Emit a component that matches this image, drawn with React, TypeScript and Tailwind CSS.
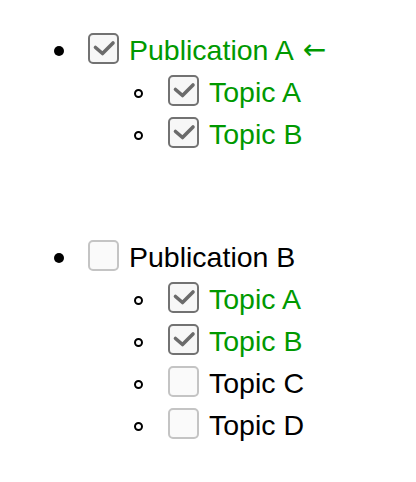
import React from "react";

type Item = { label: string; checked: boolean; arrow?: boolean };
type Group = { pub: Item; topics: Item[] };

const groups: Group[] = [
  {
    pub: { label: "Publication A", checked: true, arrow: true },
    topics: [
      { label: "Topic A", checked: true },
      { label: "Topic B", checked: true },
    ],
  },
  {
    pub: { label: "Publication B", checked: false },
    topics: [
      { label: "Topic A", checked: true },
      { label: "Topic B", checked: true },
      { label: "Topic C", checked: false },
      { label: "Topic D", checked: false },
    ],
  },
];

function Box({ checked }: { checked: boolean }) {
  return checked ? (
    <span className="flex h-[31px] w-[31px] shrink-0 items-center justify-center rounded-[5px] border-2 border-[#727272] bg-[#f7f7f7]">
      <svg width="27" height="27" viewBox="0 0 27 27" fill="none">
        <path
          d="M5.5 12.5 L12.5 18.5 L23 8"
          stroke="#6b6b6b"
          strokeWidth="3.6"
          strokeLinecap="round"
          strokeLinejoin="round"
        />
      </svg>
    </span>
  ) : (
    <span className="block h-[31px] w-[31px] shrink-0 rounded-[5px] border-2 border-[#c4c4c4] bg-[#fafafa]" />
  );
}

function Label({ item }: { item: Item }) {
  return (
    <span
      className={
        "ml-[10px] flex items-center whitespace-nowrap pt-[3px] leading-[32px] " +
        (item.checked ? "text-[#009900]" : "text-black")
      }
    >
      <span>{item.label}</span>
      {item.arrow ? (
        <span className="ml-[9px] font-['DejaVu_Sans',sans-serif] text-[28px] leading-[32px]">
          {"\u2190"}
        </span>
      ) : null}
    </span>
  );
}

export default function App() {
  return (
    <div className="min-h-[482px] w-[416px] bg-white pt-[27px] font-['Liberation_Sans',Arial,sans-serif] text-[28.5px]">
      {groups.map((g, gi) => (
        <div key={gi} className={gi > 0 ? "mt-[81px]" : ""}>
          <div className="flex h-[42px] items-center pl-[54px]">
            <span className="mt-[6px] block h-[10px] w-[10px] shrink-0 rounded-full bg-black" />
            <span className="ml-[24px] flex">
              <Box checked={g.pub.checked} />
            </span>
            <Label item={g.pub} />
          </div>
          {g.topics.map((t, ti) => (
            <div key={ti} className="flex h-[42px] items-center pl-[134px]">
              <span className="mt-[6px] block h-[9px] w-[9px] shrink-0 rounded-full border-2 border-black" />
              <span className="ml-[25px] flex">
                <Box checked={t.checked} />
              </span>
              <Label item={t} />
            </div>
          ))}
        </div>
      ))}
    </div>
  );
}
